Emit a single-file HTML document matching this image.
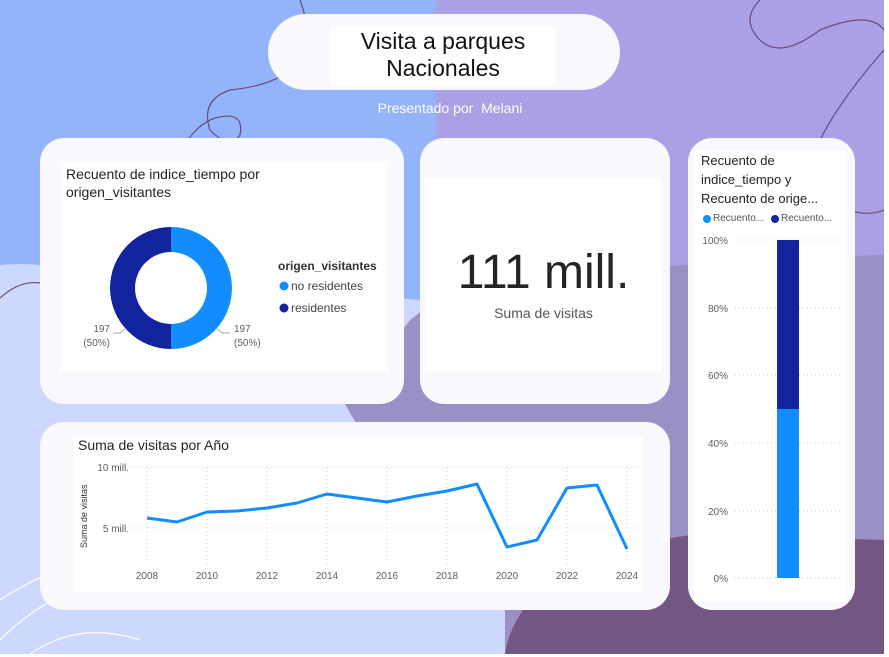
<!DOCTYPE html>
<html><head><meta charset="utf-8"><style>
body{margin:0;width:889px;height:657px;overflow:hidden;font-family:"Liberation Sans","DejaVu Sans",sans-serif;position:relative;background:#fff}
.abs{position:absolute}
.card{position:absolute;background:#f9f9fd;border-radius:24px}
.panel{position:absolute;background:#fff}
</style></head><body>
<svg class="abs" style="left:0;top:0" width="889" height="657">
<rect x="0" y="0" width="884" height="654" fill="#ab9fe6"/>
<path d="M0 0 H436 V330 L0 330 Z" fill="#93b4fb"/>
<path d="M0 265 Q30 262 60 268 L420 300 L420 330 L345 404 L360 430 L505 430 L505 654 L0 654 Z" fill="#ccd8fd"/>
<path d="M436 300 Q600 262 884 255 L884 654 L505 654 L505 430 L360 430 L345 404 L410 320 Z" fill="#9b90c6"/>
<path d="M505 654 Q520 560 690 535 L884 540 L884 654 Z" fill="#735683"/>
<path d="M300 0 Q330 80 230 90 Q200 100 210 130 Q230 150 240 135 Q245 110 215 118 Q180 130 165 200 Q160 230 130 250" stroke="#6b4a7a" stroke-width="1.2" fill="none"/>
<path d="M0 298 Q20 280 40 283" stroke="#6b4a7a" stroke-width="1.2" fill="none"/>
<path d="M760 0 Q740 20 760 40 Q780 60 820 30 Q870 10 884 30 M884 50 Q840 100 820 140 Q800 180 830 200 Q860 220 884 210" stroke="#6b4a7a" stroke-width="1.2" fill="none"/>
<path d="M0 640 Q40 600 80 590 M0 600 Q30 580 60 570 M30 654 Q80 620 140 640" stroke="#fff" stroke-width="1.2" fill="none"/>
</svg>

<div class="card" style="left:268px;top:14px;width:352px;height:76px;border-radius:38px"></div>
<div class="panel" style="left:330px;top:26px;width:226px;height:58px;text-align:center;font-size:23px;line-height:27px;color:#111;padding-top:2px">Visita a parques<br>Nacionales</div>
<div class="abs" style="left:340px;top:100px;width:220px;text-align:center;color:#fff;font-size:14px">Presentado por&nbsp; Melani</div>

<div class="card" style="left:40px;top:138px;width:364px;height:266px"></div>
<div class="panel" style="left:61px;top:162px;width:326px;height:210px"></div>
<div class="abs" style="left:66px;top:165px;font-size:14px;line-height:18px;color:#252423">Recuento de indice_tiempo por<br>origen_visitantes</div>
<svg class="abs" style="left:0;top:0" width="400" height="400">
<path d="M171 227 A61 61 0 0 1 171 349 L171 324 A36 36 0 0 0 171 252 Z" fill="#118dff"/>
<path d="M171 227 A61 61 0 0 0 171 349 L171 324 A36 36 0 0 1 171 252 Z" fill="#12239e"/>
<path d="M216 328 L222 333 L230 333 M126 328 L120 333 L113 333" stroke="#aaa" fill="none"/>
<circle cx="284" cy="286" r="4.5" fill="#118dff"/><circle cx="284" cy="308" r="4.5" fill="#12239e"/>
</svg>
<div class="abs" style="left:278px;top:259px;font-size:12px;font-weight:bold;color:#333">origen_visitantes</div>
<div class="abs" style="left:291px;top:279px;font-size:12px;color:#444">no residentes</div>
<div class="abs" style="left:291px;top:301px;font-size:12px;color:#444">residentes</div>
<div class="abs" style="left:82px;top:323px;font-size:10px;line-height:14px;color:#605e5c;text-align:right;width:28px">197<br>(50%)</div>
<div class="abs" style="left:234px;top:323px;font-size:10px;line-height:14px;color:#605e5c">197<br>(50%)</div>

<div class="card" style="left:420px;top:138px;width:250px;height:266px"></div>
<div class="panel" style="left:425px;top:178px;width:237px;height:194px"></div>
<div class="abs" style="left:425px;top:245px;width:237px;text-align:center;font-size:48px;color:#252423">111 mill.</div>
<div class="abs" style="left:425px;top:305px;width:237px;text-align:center;font-size:14px;color:#555">Suma de visitas</div>

<div class="card" style="left:688px;top:138px;width:167px;height:472px"></div>
<div class="panel" style="left:694px;top:150px;width:152px;height:452px"></div>
<div class="abs" style="left:701px;top:151px;font-size:13px;line-height:19px;color:#252423">Recuento de<br>indice_tiempo y<br>Recuento de orige...</div>
<svg class="abs" style="left:0;top:0" width="889" height="657">
<circle cx="707" cy="219" r="4" fill="#118dff"/><circle cx="775" cy="219" r="4" fill="#12239e"/>
<g stroke="#ccc" stroke-dasharray="1 3">
<line x1="735" y1="240" x2="840" y2="240"/><line x1="735" y1="308" x2="840" y2="308"/><line x1="735" y1="375" x2="840" y2="375"/><line x1="735" y1="443" x2="840" y2="443"/><line x1="735" y1="511" x2="840" y2="511"/><line x1="735" y1="578" x2="840" y2="578"/>
</g>
<rect x="777" y="240" width="22" height="169" fill="#12239e"/>
<rect x="777" y="409" width="22" height="169" fill="#118dff"/>
<g font-size="10" fill="#605e5c" text-anchor="end" font-family="Liberation Sans, sans-serif">
<text x="728" y="244">100%</text><text x="728" y="312">80%</text><text x="728" y="379">60%</text><text x="728" y="447">40%</text><text x="728" y="515">20%</text><text x="728" y="582">0%</text>
</g>
</svg>
<div class="abs" style="left:713px;top:213px;font-size:10px;color:#555">Recuento...</div>
<div class="abs" style="left:781px;top:213px;font-size:10px;color:#555">Recuento...</div>

<div class="card" style="left:40px;top:422px;width:630px;height:188px"></div>
<div class="panel" style="left:73px;top:437px;width:570px;height:155px"></div>
<div class="abs" style="left:78px;top:437px;font-size:14px;color:#252423">Suma de visitas por Año</div>
<svg class="abs" style="left:0;top:0" width="889" height="657">
<g stroke="#ccc" stroke-dasharray="1 3">
<line x1="130" y1="467" x2="640" y2="467"/><line x1="130" y1="528" x2="640" y2="528"/>
<line x1="147" y1="467" x2="147" y2="565"/><line x1="207" y1="467" x2="207" y2="565"/><line x1="267" y1="467" x2="267" y2="565"/><line x1="327" y1="467" x2="327" y2="565"/><line x1="387" y1="467" x2="387" y2="565"/><line x1="447" y1="467" x2="447" y2="565"/><line x1="507" y1="467" x2="507" y2="565"/><line x1="567" y1="467" x2="567" y2="565"/><line x1="627" y1="467" x2="627" y2="565"/>
</g>
<polyline fill="none" stroke="#118dff" stroke-width="3" stroke-linejoin="round" points="147,518 177,522 207,512 237,511 267,508 297,503 327,494 357,498 387,502 417,496 447,491 477,484 507,547 537,540 567,488 597,485 627,549"/>
<g font-size="10" fill="#605e5c" font-family="Liberation Sans, sans-serif">
<text x="129" y="471" text-anchor="end">10 mill.</text><text x="129" y="532" text-anchor="end">5 mill.</text>
<g text-anchor="middle"><text x="147" y="579">2008</text><text x="207" y="579">2010</text><text x="267" y="579">2012</text><text x="327" y="579">2014</text><text x="387" y="579">2016</text><text x="447" y="579">2018</text><text x="507" y="579">2020</text><text x="567" y="579">2022</text><text x="627" y="579">2024</text></g>
<text transform="translate(87,548) rotate(-90)" font-size="9" fill="#333">Suma de visitas</text>
</g>
</svg>
</body></html>
